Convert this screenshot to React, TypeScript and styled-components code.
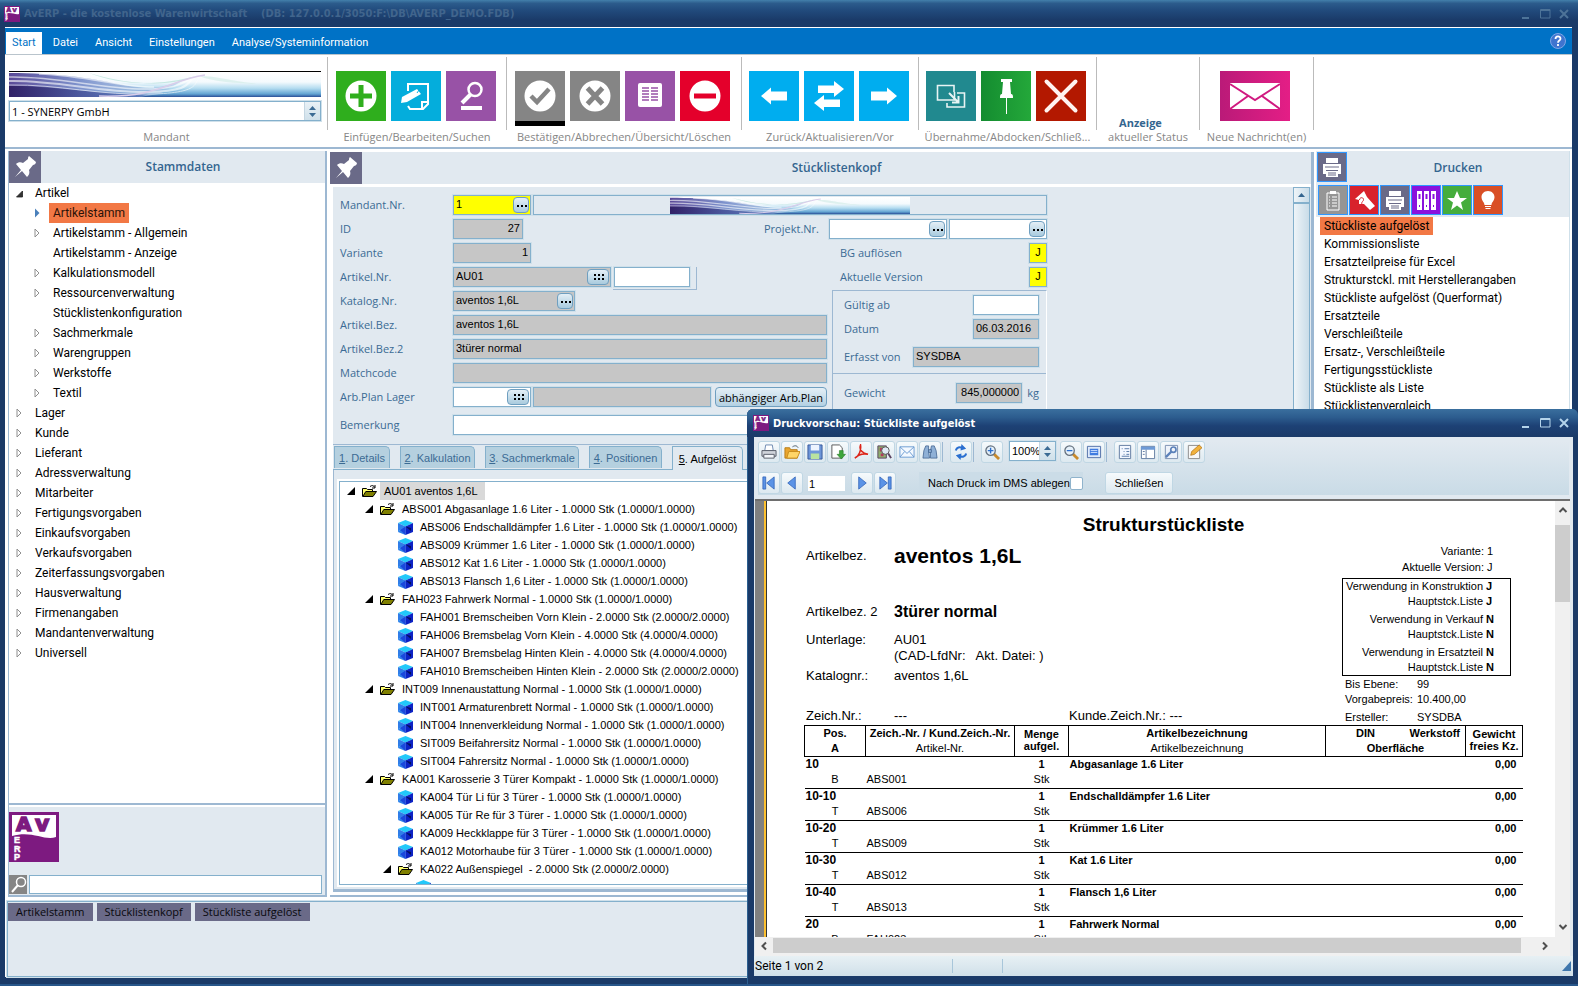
import React from "react";
import styled, { createGlobalStyle } from "styled-components";

const ui = `"Open Sans", "Noto Sans", sans-serif`;
const list = `Roboto, "Open Sans", sans-serif`;
const arial = `"Liberation Sans", Arial, sans-serif`;
const tahoma = `"DejaVu Sans Condensed", "DejaVu Sans", sans-serif`;

const c = {
  frame: "#1a3a68",
  accent: "#0072c6",
  panel: "#e1e9f0",
  edge: "#9db8d2",
  fieldEdge: "#84b0cc",
  halo: "#cfe0ea",
  title: "#34658f",
  label: "#3b6b94",
  tile: "#6a6a88",
  orange: "#f27845",
};

const GlobalStyle = createGlobalStyle`
  * { box-sizing: border-box; }
  body { margin: 0; font-family: ${ui}; font-size: 12px; color: #000; background: ${c.frame}; }
  button, input, select { font: inherit; color: inherit; margin: 0; padding: 0; border: 0; border-radius: 0; background: none; }
  ul, dl, dd, h1, h2, p { margin: 0; padding: 0; font-size: inherit; font-weight: inherit; }
  ul { list-style: none; }
  svg { display: block; }
`;

/* ---------- frame ---------- */

const Shell = styled.div`
  position: relative;
  display: flex;
  flex-direction: column;
  height: 100vh;
  overflow: hidden;
  background: ${c.frame};
  border-bottom: 2px solid #27568a;
`;
const TitleBar = styled.header<{ $active?: boolean }>`
  display: flex;
  align-items: center;
  flex: none;
  gap: 4px;
  height: ${(p) => (p.$active ? 28 : 27)}px;
  padding: 0 7px 0 ${(p) => (p.$active ? 6 : 4)}px;
  font: bold 11px ${tahoma};
  white-space: pre;
  color: ${(p) => (p.$active ? "#fff" : "#41658d")};
  background: ${(p) =>
    p.$active
      ? "linear-gradient(#3a6f9e, #2c5c8e 30%, #1d4175 60%, #1a3a68)"
      : "linear-gradient(#4380ab 0, #2c5c8c 12%, #224c7e 35%, #1a3a68 75%)"};
`;
const Caption = styled.h1`
  flex: 1;
  min-width: 0;
  overflow: hidden;
`;
const WindowButtons = styled.div<{ $active?: boolean }>`
  display: flex;
  gap: 5px;
  color: ${(p) => (p.$active ? "#b4d3ea" : "#4d7398")};
`;
const WindowButton = styled.button`
  width: 14px;
  height: 14px;
`;
const Body = styled.div`
  display: flex;
  flex-direction: column;
  flex: 1;
  min-height: 0;
  margin: 0 6px 7px 5px;
  background: #fff;
  border-top: 1px solid #fff;
`;

/* ---------- menu and ribbon ---------- */

const MenuBar = styled.nav`
  display: flex;
  align-items: flex-end;
  flex: none;
  height: 27px;
  padding: 0 6px 0 1px;
  background: ${c.accent};
  border-bottom: 1px solid #b9c4cc;
`;
const MenuTab = styled.button<{ $on?: boolean }>`
  height: 22px;
  margin-right: 5px;
  padding: 0 6px;
  font: 11px ${list};
  line-height: 22px;
  color: ${(p) => (p.$on ? c.accent : "#fff")};
  background: ${(p) => (p.$on ? "#fff" : "none")};
`;
const HelpButton = styled.button`
  width: 16px;
  height: 16px;
  margin: 0 0 5px auto;
`;
const Ribbon = styled.div`
  display: flex;
  flex: none;
  height: 94px;
  padding: 2px 0 0 1px;
  border-bottom: 2px solid ${c.edge};
`;
const Group = styled.section<{ $w: number }>`
  width: ${(p) => p.$w}px;
  flex: none;
`;
const GroupContent = styled.div`
  display: flex;
  justify-content: center;
  gap: 5px;
  height: 73px;
  padding: 14px 3px 0 0;
  border-right: 1px solid #bbb;
`;
const GroupCaption = styled.p`
  padding-right: 1px;
  font-size: 11px;
  line-height: 14px;
  text-align: center;
  color: #868686;
`;
const MandantBox = styled.div`
  flex: 1;
  padding: 0 3px;
`;
const Banner = styled.div`
  height: 26px;
  margin-bottom: 4px;
  border-top: 1px solid #000;
`;
const SelectBox = styled.div<{ $w?: number }>`
  display: flex;
  ${(p) => p.$w && `width: ${p.$w}px; margin: 0 3px 0 5px;`}
  height: 20px;
  background: #fff;
  border: 1px solid ${c.fieldEdge};
  box-shadow: 0 0 0 1px ${c.halo};
`;
const Select = styled.select`
  flex: 1;
  min-width: 0;
  padding-left: 2px;
  font-size: 11px;
  appearance: none;
  outline: 0;
`;
const Spin = styled.span`
  display: grid;
  place-items: center;
  width: 16px;
  background: linear-gradient(#e9f1f6, #cfe0ea);
  border-left: 1px solid #c4d6e2;
`;
const Tile = styled.button<{ $bg: string; $w?: number; $marked?: boolean }>`
  width: ${(p) => p.$w ?? 50}px;
  height: ${(p) => (p.$marked ? 55 : 50)}px;
  background: ${(p) => p.$bg};
  ${(p) => p.$marked && "border-bottom: 5px solid #000;"}
`;
const StatusText = styled.p`
  align-self: flex-end;
  font-size: 11px;
  font-weight: bold;
  line-height: 14px;
  color: ${c.title};
  margin-right: 12px;
`;

/* ---------- work area ---------- */

const Work = styled.main`
  display: flex;
  flex: 1;
  min-height: 0;
`;
const Side = styled.aside`
  display: flex;
  flex-direction: column;
  flex: none;
  width: 319px;
  margin: 2px 2px 0 3px;
  border-left: 1px solid ${c.edge};
  border-right: 2px solid ${c.edge};
`;
const PanelHead = styled.div`
  display: flex;
  flex: none;
  height: 32px;
  background: ${c.panel};
`;
const PinTile = styled.button`
  width: 32px;
  height: 32px;
  background: ${c.tile};
`;
const PanelTitle = styled.h2`
  flex: 1;
  font-size: 12px;
  font-weight: 600;
  line-height: 32px;
  text-align: center;
  color: ${c.title};
`;
const NavTree = styled.ul`
  flex: 1;
  min-height: 0;
  overflow: hidden;
  border-bottom: 2px solid ${c.edge};
  font-family: ${list};
`;
const NavRow = styled.li<{ $level: number }>`
  display: flex;
  align-items: center;
  height: 20px;
  padding-left: ${(p) => 7 + p.$level * 18}px;
`;
const NavArrow = styled.span`
  width: 15px;
`;
const NavText = styled.a<{ $on?: boolean }>`
  padding: 0 4px;
  line-height: 20px;
  color: ${(p) => (p.$on ? "#2b1208" : "#000")};
  text-decoration: none;
  background: ${(p) => (p.$on ? c.orange : "none")};
`;
const SideFoot = styled.div`
  flex: none;
  margin-top: 2px;
  height: 90px;
  padding: 5px 3px 0 0;
  background: ${c.panel};
  border-bottom: 2px solid ${c.edge};
`;
const SearchRow = styled.div`
  display: flex;
  gap: 2px;
  margin-top: 13px;
`;
const SearchButton = styled.button`
  width: 18px;
  height: 19px;
  background: #858585;
`;
const SearchInput = styled.input`
  flex: 1;
  min-width: 0;
  height: 19px;
  background: #fff;
  border: 1px solid ${c.fieldEdge};
`;

const Center = styled.section`
  display: flex;
  flex-direction: column;
  flex: 1;
  min-width: 0;
  margin: 3px 2px 0 1px;
  border-right: 3px solid ${c.edge};
  border-bottom: 2px solid ${c.edge};
`;
const CenterBody = styled.div`
  display: flex;
  flex: 1;
  min-height: 0;
  margin: 3px 0 3px 3px;
  background: ${c.panel};
  border-bottom: 3px solid ${c.edge};
`;
const CenterMain = styled.div`
  display: flex;
  flex-direction: column;
  flex: 1;
  min-width: 0;
`;
const ScrollTrack = styled.div`
  width: 17px;
  margin-right: 1px;
  border: 1px solid ${c.fieldEdge};
  background: linear-gradient(90deg, #eef4f8, #c9dce8);
`;
const ScrollUp = styled.button`
  display: grid;
  place-items: center;
  width: 15px;
  height: 16px;
  border-bottom: 2px solid ${c.fieldEdge};
`;

/* ---------- form ---------- */

const Form = styled.form`
  display: grid;
  grid-template-columns: 113px 374px 220px;
  grid-auto-rows: 20px;
  row-gap: 4px;
  flex: none;
  padding: 8px 0 13px 7px;
`;
const Label = styled.label<{ $w?: number }>`
  ${(p) => p.$w && `width: ${p.$w}px;`}
  font-size: 11px;
  line-height: 20px;
  color: ${c.label};
  white-space: nowrap;
`;
const Cell = styled.div<{ $wide?: boolean }>`
  display: flex;
  gap: 2px;
  ${(p) => p.$wide && "grid-column: 2 / 4;"}
`;
const Field = styled.span<{ $w?: number; $bg?: string }>`
  display: flex;
  align-items: center;
  ${(p) => (p.$w ? `width: ${p.$w}px; flex: none;` : "flex: 1; min-width: 0;")}
  height: 20px;
  background: ${(p) => p.$bg ?? "#fff"};
  border: 1px solid ${c.fieldEdge};
  box-shadow: 0 0 0 1px ${c.halo};
  font: 11px ${arial};
`;
const FieldInput = styled.input<{ $align?: string }>`
  flex: 1;
  width: 0;
  min-width: 0;
  height: 18px;
  padding: 0 2px 2px;
  text-align: ${(p) => p.$align ?? "left"};
  outline: 0;
`;
const Lookup = styled.button<{ $w: number }>`
  display: grid;
  place-items: center;
  flex: none;
  width: ${(p) => p.$w}px;
  height: 16px;
  margin-right: 1px;
  border: 1px solid #6f9fc0;
  border-radius: 4px;
  background: linear-gradient(#e4eff6, #a9cbde);
`;
const BannerField = styled(Field)`
  justify-content: center;
`;
const BannerClip = styled.span`
  width: 240px;
  height: 17px;
`;
const Spacer = styled.span`
  flex: 1;
`;
const ExtraFrame = styled.span`
  display: flex;
  width: 84px;
  height: 23px;
  padding: 0 6px 2px 1px;
  border-right: 1px solid ${c.edge};
  border-bottom: 1px solid ${c.edge};
`;
const PlanButton = styled.button`
  width: 112px;
  height: 20px;
  margin-left: 2px;
  font-size: 11px;
  line-height: 17px;
  white-space: nowrap;
  border: 1px solid #6f9fc0;
  border-radius: 4px;
  background: linear-gradient(#e4eff6, #b3d0e2);
`;
const DateBox = styled.div`
  grid-column: 3;
  grid-row: 5 / 10;
  margin: -1px 0 -6px 5px;
  border: solid ${c.edge};
  border-width: 1px 0 0 1px;
  border-right: 1px solid #fff;
`;
const DateRow = styled.div<{ $mt: number }>`
  display: flex;
  justify-content: space-between;
  margin-top: ${(p) => p.$mt}px;
  padding: 0 7px 0 11px;
`;
const DateRule = styled.hr`
  height: 1px;
  margin: 6px 0 0;
  border: 0;
  background: ${c.edge};
`;
const Unit = styled.span`
  margin-left: 5px;
  font-size: 11px;
  line-height: 20px;
  color: ${c.label};
`;
const RemarkLine = styled.div`
  display: flex;
  grid-column: 1 / 4;
  padding-top: 4px;
  height: 24px;
`;

/* ---------- tabs and parts tree ---------- */

const Tabs = styled.div`
  display: flex;
  gap: 10px;
  flex: none;
  height: 26px;
  padding: 1px 1px 0;
  border-top: 1px solid ${c.edge};
  border-bottom: 1px solid ${c.fieldEdge};
`;
const Tab = styled.button<{ $on?: boolean; $w: number }>`
  width: ${(p) => p.$w}px;
  height: ${(p) => (p.$on ? 24 : 22)}px;
  font: 11px ${arial};
  white-space: nowrap;
  color: ${(p) => (p.$on ? "#000" : c.label)};
  border: 1px solid ${c.fieldEdge};
  border-bottom: 0;
  border-radius: 0 5px 0 0;
  background: ${(p) => (p.$on ? c.panel : "#b5d0df")};
`;
const PartsPane = styled.div`
  display: flex;
  flex: 1;
  min-height: 0;
  padding: 11px 0 4px 5px;
  border-left: 1px solid ${c.edge};
`;
const PartsTree = styled.ul`
  flex: 1;
  overflow: hidden;
  padding-left: 7px;
  background: #fff;
  border: 1px solid ${c.fieldEdge};
  box-shadow: 0 0 0 2px #fff;
  font: 11px ${arial};
`;
const PartsRow = styled.li<{ $level: number }>`
  display: flex;
  align-items: center;
  height: 18px;
  padding-left: ${(p) => p.$level * 18}px;
  white-space: pre;
`;
const PartsIcon = styled.span<{ $w: number }>`
  width: ${(p) => p.$w}px;
`;
const PartsText = styled.span<{ $on?: boolean }>`
  line-height: 18px;
  padding: 0 7px 0 4px;
  background: ${(p) => (p.$on ? "#d9d9d9" : "none")};
`;

/* ---------- print list ---------- */

const PrintSide = styled.aside`
  flex: none;
  width: 254px;
  margin: 2px 2px 0 0;
  border-right: 1px solid ${c.halo};
`;
const PrintHead = styled.div`
  display: flex;
  height: 33px;
  padding: 1px 0 0 1px;
  background: ${c.panel};
`;
const SmallTile = styled.button<{ $bg: string }>`
  width: 30px;
  height: 30px;
  background: ${(p) => p.$bg};
  border: 1px solid #2f97ff;
`;
const SmallTiles = styled.div`
  display: flex;
  gap: 1px;
  height: 33px;
  padding: 1px 0 0 2px;
  background: ${c.panel};
`;
const PrintList = styled.ul`
  padding-left: 4px;
  font-family: ${list};
`;
const PrintItem = styled.li`
  height: 18px;
`;
const PrintLink = styled.a<{ $on?: boolean }>`
  display: inline-block;
  padding: 0 4px;
  line-height: 18px;
  color: #000;
  text-decoration: none;
  white-space: nowrap;
  background: ${(p) => (p.$on ? c.orange : "none")};
`;

/* ---------- task strip ---------- */

const TaskStrip = styled.footer`
  display: flex;
  align-items: flex-start;
  gap: 4px;
  flex: none;
  height: 76px;
  margin: 4px 2px 0;
  padding: 1px 0 0;
  background: ${c.panel};
  border: 1px solid ${c.fieldEdge};
  box-shadow: 0 0 0 1px ${c.halo};
`;
const Task = styled.button`
  height: 18px;
  padding: 0 8px;
  font-size: 11px;
  line-height: 18px;
  color: #08080c;
  background: ${c.tile};
`;

/* ---------- print preview window ---------- */

const Preview = styled.section`
  position: absolute;
  top: 409px;
  left: 747px;
  right: 0;
  bottom: -2px;
  display: flex;
  flex-direction: column;
  padding-bottom: 10px;
  overflow: hidden;
  background: ${c.frame};
  border-radius: 6px 6px 0 0;
  box-shadow: inset 1px 1px 0 #2b5f90;
`;
const PreviewBody = styled.div`
  display: flex;
  flex-direction: column;
  flex: 1;
  min-height: 0;
  margin: 0 5px 0 7px;
  background: ${c.panel};
`;
const ToolArea = styled.div`
  flex: none;
  height: 62px;
  padding: 4px;
`;
const ToolBand = styled.div`
  height: 54px;
  background: linear-gradient(${c.panel}, #c9dbe6);
  font: 11px ${arial};
`;
const ToolRow = styled.div<{ $low?: boolean }>`
  display: flex;
  gap: 1px;
  height: ${(p) => (p.$low ? 23 : 31)}px;
`;
const Tool = styled.button`
  display: grid;
  place-items: center;
  width: 22px;
  height: 22px;
  flex: none;
  border: 1px solid #c0d7e4;
  border-radius: 3px;
  background: linear-gradient(#f6fafc, #dde9f0);
`;
const ToolSep = styled.span`
  width: 1px;
  height: 20px;
  margin: 1px 6px 0 0;
  background: ${c.edge};
`;
const PageInput = styled.input`
  width: 37px;
  height: 15px;
  margin: 4px 5px 0 4px;
  padding-left: 1px;
  background: #fff;
`;
const DmsLabel = styled.label`
  display: flex;
  align-items: center;
  width: 164px;
  height: 22px;
  margin-left: 22px;
  padding-left: 9px;
  white-space: nowrap;
  background: #cbdce7;
`;
const DmsCheck = styled.input`
  appearance: none;
  flex: none;
  width: 13px;
  height: 13px;
  background: #fff;
  border: 1px solid #8fb3cc;
  border-radius: 2px;
`;
const CloseButton = styled.button`
  width: 68px;
  height: 22px;
  margin-left: 21px;
  border: 1px solid #c0d7e4;
  border-radius: 3px;
  background: linear-gradient(#f6fafc, #dde9f0);
`;
const Viewport = styled.div`
  display: flex;
  flex: 1;
  min-height: 0;
  margin: 0 3px 0 1px;
  border-top: 2px solid #6e6e6e;
`;
const Gutter = styled.div`
  width: 12px;
  flex: none;
  background: #808080;
  border-right: 1px solid #333;
  box-shadow: inset -2px 0 0 #fdc02f;
`;
const VScroll = styled.div`
  display: flex;
  flex-direction: column;
  align-items: center;
  width: 15px;
  flex: none;
  padding: 4px 0 5px;
  background: #f0f0f0;
`;
const VThumb = styled.div`
  width: 15px;
  height: 77px;
  margin: 10px 0 auto;
  background: #cdcdcd;
`;
const HScroll = styled.div`
  display: flex;
  align-items: center;
  justify-content: space-between;
  flex: none;
  height: 19px;
  margin: 0 3px 0 1px;
  padding: 0 20px 2px 4px;
  background: #f0f0f0;
`;
const HThumb = styled.div`
  flex: 1;
  height: 15px;
  margin: 0 19px 0 4px;
  background: #cdcdcd;
`;
const Status = styled.div`
  display: flex;
  align-items: center;
  flex: none;
  height: 20px;
  padding-left: 1px;
  background: linear-gradient(#e7f0f4, #d0e0e9);
`;
const StatusPart = styled.span<{ $w?: number }>`
  ${(p) => (p.$w ? `width: ${p.$w}px; border-right: 1px solid #a8c6da;` : "flex: 1;")}
  line-height: 18px;
  font: 12px ${list};
`;

/* ---------- report page ---------- */

const Page = styled.article`
  flex: 1;
  min-width: 0;
  overflow: hidden;
  padding: 11px 32px 0 37px;
  background: #fff;
  font: 13px ${arial};
`;
const ReportTitle = styled.h1`
  font-size: 19px;
  font-weight: bold;
  line-height: 26px;
  text-align: center;
`;
const ReportHead = styled.div`
  display: grid;
  grid-template-columns: 1fr 169px;
  padding-right: 12px;
  height: 187px;
`;
const Info = styled.dl<{ $mt?: number; $h?: number }>`
  display: grid;
  grid-template-columns: 88px 175px 1fr;
  margin: ${(p) => p.$mt ?? 0}px 0 0 2px;
  line-height: ${(p) => p.$h ?? 16}px;
  white-space: pre;
`;
const Big = styled.dd<{ $size: number }>`
  font-size: ${(p) => p.$size}px;
  font-weight: bold;
`;
const Usage = styled.div`
  font-size: 11px;
`;
const UsageRow = styled.p<{ $mt?: number; $h?: number }>`
  display: grid;
  grid-template-columns: 1fr 24px;
  column-gap: 3px;
  margin-top: ${(p) => p.$mt ?? 0}px;
  line-height: ${(p) => p.$h ?? 15}px;
  text-align: right;
  white-space: nowrap;
`;
const UsageValue = styled.span`
  text-align: left;
`;
const UsageFlag = styled.b`
  text-align: left;
`;
const UsageBox = styled.div`
  margin: 3px 0 1px;
  border: 1px solid #000;
`;
const MetaRow = styled.p<{ $mt?: number }>`
  display: grid;
  grid-template-columns: 72px 1fr;
  margin: ${(p) => p.$mt ?? 0}px 0 0 3px;
  line-height: 15px;
`;
const Table = styled.table`
  width: 100%;
  table-layout: fixed;
  border-collapse: collapse;
  font-size: 11px;
  white-space: nowrap;
`;
const Th = styled.th<{ $w?: number }>`
  ${(p) => p.$w && `width: ${p.$w}px;`}
  height: 30px;
  padding: 0;
  vertical-align: top;
  line-height: 15px;
  border: 1px solid #000;
`;
const ThTight = styled(Th)`
  line-height: 12px;
  padding-top: 2px;
`;
const Plain = styled.span`
  font-weight: normal;
`;
const DinLine = styled.div`
  display: flex;
  justify-content: space-between;
  padding: 0 5px 0 30px;
`;
const Tr = styled.tr`
  height: 32px;
  border-bottom: 1px solid #000;
`;
const Td = styled.td<{ $align?: string; $bold?: boolean }>`
  padding: 0 ${(p) => (p.$align === "right" ? 6 : 1)}px 0 1px;
  line-height: 15px;
  vertical-align: top;
  text-align: ${(p) => p.$align ?? "left"};
  font-weight: ${(p) => (p.$bold ? "bold" : "normal")};
`;
const Line = styled.div<{ $bold?: boolean; $align?: string; $size?: number }>`
  height: 15px;
  font-weight: ${(p) => (p.$bold ? "bold" : "normal")};
  text-align: ${(p) => p.$align ?? "inherit"};
  font-size: ${(p) => p.$size ?? 11}px;
`;

/* ---------- drawings ---------- */

const Logo = ({ size }: { size: number }) => (
  <svg width={size} height={size} viewBox="0 0 50 50">
    <rect width="50" height="50" fill="#7d1a80" />
    <path d="M3 3h44v22c-12 4-24-7-44-1z" fill="#fff" />
    <g fontFamily="DejaVu Sans" fontWeight="bold" fontSize="20" fill="#7d1a80" stroke="#7d1a80" strokeWidth="1.500">
      <text x="7" y="19">A</text>
      <text x="26" y="19" fontSize="22">v</text>
    </g>
    <g fontFamily="Liberation Sans" fontWeight="bold" fontSize="9" fill="#fff" stroke="#fff" strokeWidth=".5">
      <text x="5" y="31">E</text>
      <text x="5" y="40">R</text>
      <text x="5" y="48">P</text>
    </g>
  </svg>
);

const Waves = ({ id }: { id: string }) => (
  <svg width="100%" height="100%" viewBox="0 0 312 25" preserveAspectRatio="none">
    <defs>
      <linearGradient id={id + "v"} x1="0" y1="0" x2="0" y2="1">
        <stop offset="0" stopColor="#fff" />
        <stop offset=".4" stopColor="#f4fafd" />
        <stop offset=".65" stopColor="#b4dcf0" />
        <stop offset=".88" stopColor="#62a4d2" />
        <stop offset="1" stopColor="#2a4f98" />
      </linearGradient>
      <linearGradient id={id + "h"}>
        <stop offset="0" stopColor="#5a4a98" />
        <stop offset=".4" stopColor="#7d92cc" />
        <stop offset="1" stopColor="#a9cbe8" stopOpacity=".5" />
      </linearGradient>
      <linearGradient id={id + "d"}>
        <stop offset="0" stopColor="#2a1a5e" />
        <stop offset="1" stopColor="#3f5fb0" stopOpacity=".6" />
      </linearGradient>
    </defs>
    <rect width="312" height="25" fill={`url(#${id}v)`} />
    <path d="M0 1C50 1 80 6 110 12S150 17 175 8L150 22 130 25H0z" fill={`url(#${id}h)`} />
    <path d="M0 14C40 13 80 22 140 22L130 25H0z" fill={`url(#${id}d)`} opacity=".85" />
    <path d="M80 1c30 12 70 14 110 2 -20 10-60 13-110-2z" fill="#a6dcd0" opacity=".6" />
    <path d="M190 4c20 0 30 5 60 8 -25-1-45-2-60-8z" fill="#d4ece8" opacity=".7" />
    <g fill="none" stroke="#fff" opacity=".6">
      <path d="M0 5C50 4 90 17 135 17S175 5 195 3" strokeWidth="1.500" />
      <path d="M0 9C50 8 90 21 140 20S175 7 190 3" strokeWidth="2" />
      <path d="M0 13C50 12 90 24 145 22S180 8 196 2" />
      <path d="M30 2C80 4 110 15 145 15" strokeWidth="1.500" />
    </g>
    <path d="M90 24C150 26 160 8 196 3" fill="none" stroke="#d9cdea" strokeWidth="1.500" />
  </svg>
);

const Spinner = () => (
  <svg width="7" height="11" viewBox="0 0 7 11" fill="#3b6b94">
    <path d="M3.500 0L7 4H0zM3.500 11L7 7H0z" />
  </svg>
);

const PushPin = () => (
  <svg width="32" height="32" viewBox="0 0 32 32" fill="#fff">
    <path d="M20 5l7 6c0 2-2 3-3 3l-4 5c1 3 0 5-2 7l-5-6-7 6 6-7-5-6c2-2 5-2 7-1l5-4c0-1 0-2 1-3z" />
  </svg>
);

const arrowR = "M38 25L28 16.500v4H12v9h16v4z";
const ribbonArt: Record<string, React.ReactNode> = {
  add: (<><circle cx="25" cy="25" r="15.500" fill="#fff" /><path d="M25 14v22M14 25h22" stroke="#2fae1d" strokeWidth="5" /></>),
  edit: (
    <>
      <path d="M17 20v-7h20v20l-5 5H19l-2-3M37 31h-6v7" fill="none" stroke="#fff" strokeWidth="2" />
      <path d="M10 32l1-6 15-8 4 5-14 8z" fill="#fff" />
      <path d="M26 22l2-3" stroke="#04addc" strokeWidth="1" />
    </>
  ),
  find: (<><circle cx="29" cy="18.500" r="6.500" fill="none" stroke="#fff" strokeWidth="2.500" /><path d="M25 23l-9 9" stroke="#fff" strokeWidth="4" /><path d="M15 35h21v4H15z" fill="#fff" /></>),
  ok: (<><circle cx="25" cy="25" r="15.500" fill="#fff" /><path d="M16 25l6 6 12-13" fill="none" stroke="#858585" strokeWidth="4.500" /></>),
  cancel: (<><circle cx="25" cy="25" r="15.500" fill="#fff" /><path d="M17.500 17l15 16M32.500 17l-15 16" stroke="#858585" strokeWidth="5" /></>),
  list: (
    <>
      <rect x="13" y="12" width="24" height="24" rx="2" fill="#fff" />
      <path d="M17 17h7M26 17h7M17 20h7M26 20h7M17 23h7M26 23h7M17 26h7M26 26h7M17 29h7M26 29h7" stroke="#9852a6" strokeWidth="1.500" />
    </>
  ),
  remove: (<><circle cx="25" cy="25" r="15.500" fill="#fff" /><path d="M14 25h22" stroke="#e4002b" strokeWidth="5" /></>),
  back: <path d={arrowR} fill="#fff" transform="rotate(180 25 25)" />,
  fwd: <path d={arrowR} fill="#fff" />,
  swap: <path d="M40 18l-10-8v4.500H14v7.500h16v4zM10 32l10 8v-4h16v-7.500H20V24z" fill="#fff" />,
  take: (
    <g fill="none" stroke="#e8f4f4" strokeWidth="1.600">
      <path d="M21 29h-9.500V14.500H28V21M31 22h7.500v14H21v-4M28.500 21v8H21" />
      <path d="M23 22l9 9M32.500 25v6.500H26" strokeWidth="2" />
    </g>
  ),
  undock: <path d="M20 8h11v3h-2l1 12c2 0 2 2 2 4h-6v16h-1V27h-6c0-2 0-4 2-4l1-12h-2z" fill="#fff" />,
  close: <path d="M10.500 10.500l29 29M39.500 10.500l-29 29" stroke="#fff3f0" strokeWidth="4" strokeLinecap="round" />,
};

const RibbonIcon = ({ name }: { name: string }) => (
  <svg width="50" height="50" viewBox="0 0 50 50">{ribbonArt[name]}</svg>
);

const Mail = () => (
  <svg width="70" height="50" viewBox="0 0 70 50">
    <rect x="10" y="12" width="50" height="26" fill="#fff" />
    <path d="M10 13l25 16 25-16M10 38l18-13M60 38L42 25" fill="none" stroke="#d01a80" strokeWidth="2" />
  </svg>
);

const smallArt: Record<string, React.ReactNode> = {
  print: (<><path d="M8 5h12v5H8z" fill="#fff" /><path d="M5 11h18v10h-3v-4H8v4H5z" fill="#fff" /><path d="M8 18h12v6H8z" fill="#fff" /><path d="M10 20h8M10 22h8" stroke={c.tile} /><path d="M7 14h14" stroke={c.tile} /></>),
  clip: (<><path d="M8 7h12v17H8z" fill="none" stroke="#fff" /><path d="M11 5h6v3h-6z" fill="#fff" /><path d="M10 11h1M13 11h5M10 14h1M13 14h5M10 17h1M13 17h5M10 20h1M13 20h5" stroke="#fff" /></>),
  tag: (<><path d="M14 5l-9 8 4 1v4h5l6 6 5-4-8-9z" fill="#fff" /><path d="M9.500 14c0-3 4-3 4-.5S11 15 12 19" stroke="#d8222c" fill="none" /></>),
  binders: (<g fill="#fff"><path d="M5 5h5v19H5zM12 5h5v19h-5zM19 5h5v19h-5z" /><path d="M6.500 8h2v5h-2zM13.500 8h2v5h-2zM20.500 8h2v5h-2zM7 19h1v2H7zM14 19h1v2h-1zM21 19h1v2h-1z" fill="#8a12dc" /></g>),
  star: <path d="M14 5l3 7h7l-6 4.500 2 7.500-6-4.500L8 24l2-7.500L4 12h7z" fill="#fff" />,
  bulb: (<><path d="M14 5c4 0 6.500 3 6.500 6 0 4-3 5-3 8h-7c0-3-3-4-3-8 0-3 2.500-6 6.500-6z" fill="#fff" /><path d="M11 20.500h6M11.500 22.500h5" stroke="#fff" strokeWidth="1.200" /></>),
};
const SmallIcon = ({ name }: { name: string }) => (
  <svg width="28" height="28" viewBox="0 0 28 28">{smallArt[name]}</svg>
);

const toolArt: Record<string, React.ReactNode> = {
  print: (<><path d="M5 1h7l1 6H4z" fill="#fff" stroke="#6c87b0" /><path d="M1 7h15v6H1z" fill="#cfd3da" stroke="#555b66" /><path d="M3 11h11v4H3z" fill="#f3f6fa" stroke="#555b66" /></>),
  open: (<><path d="M1 15V4h5l1 2h7v9z" fill="#e9a52e" stroke="#b87b14" /><path d="M3 15l2-7h12l-3 7z" fill="#ffd567" stroke="#c68b1b" /><path d="M9 3c3-2 5-1 6 1" fill="none" stroke="#456" /></>),
  save: (<><path d="M1 1h15v15H1z" fill="#6d95d8" stroke="#35579b" /><path d="M4 1h9v6H4z" fill="#eef4ff" /><path d="M4 10h9v6H4z" fill="#b9e2a0" /></>),
  exportDoc: (<><path d="M2 1h8l3 3v11H2z" fill="#fff" stroke="#555" /><path d="M10 7h4v4h2.500L12 16 7.500 11H10z" fill="#3da53a" stroke="#237a22" strokeWidth=".6" /></>),
  pdf: <path d="M8 1c-2 5 2 9 8 10-5-1-10 0-14 4 4-2 7-8 6-14z" fill="#f8d6d0" stroke="#dc2418" strokeWidth="1.600" />,
  findDoc: (<><path d="M2 2h9v13H2z" fill="#8fae6f" stroke="#59415f" /><path d="M4 4h3v4H4zM5 10h3v3H5z" fill="#b23a5c" /><circle cx="10" cy="7" r="4" fill="#dfe9f4" stroke="#555" /><path d="M13 10l3 5" stroke="#59415f" strokeWidth="2" /></>),
  mail: (<><path d="M1 3h15v11H1z" fill="#f4f9ff" stroke="#6b9bd1" /><path d="M1 3l7.500 7L16 3M1 14l5-6M16 14l-5-6" fill="none" stroke="#6b9bd1" /></>),
  binoculars: (<g fill="#8fb0d6" stroke="#3d5f8c" strokeWidth=".8"><path d="M4 2h3v5l1 8H1l1-8zM10 2h3l2 5 1 8H9V7z" /><path d="M7 6h3v3H7z" /></g>),
  refresh: (<g fill="none" stroke="#2a6fd0" strokeWidth="2.200"><path d="M3 7c1-4 4-4 7-3" /><path d="M14 10c-1 4-4 4-7 3" /><path d="M9 0l5 5-6 2zM8 17l-5-5 6-2z" fill="#2a6fd0" stroke="none" /></g>),
  zoomIn: (<><path d="M10 10l6 6" stroke="#c98a2c" strokeWidth="3" /><circle cx="7" cy="7" r="5" fill="#e6f1fa" stroke="#66727f" strokeWidth="1.400" /><path d="M7 4v6M4 7h6" stroke="#2a6fd0" strokeWidth="1.500" /></>),
  zoomOut: (<><path d="M10 10l6 6" stroke="#c98a2c" strokeWidth="3" /><circle cx="7" cy="7" r="5" fill="#e6f1fa" stroke="#66727f" strokeWidth="1.400" /><path d="M4 7h6" stroke="#2a6fd0" strokeWidth="1.500" /></>),
  screen: (<><path d="M1.500 2.500h14v12h-14z" fill="#dfeafa" stroke="#4f6ea8" /><path d="M4 5h9v7H4z" fill="#3f7be0" /><path d="M5 7h7M5 9h7" stroke="#cfe0ff" /></>),
  outline: (<><path d="M2.500 1.500h12v14h-12z" fill="#f3f7ff" stroke="#5f7a9f" /><path d="M5 5h1M8 5h5M7 8h1M10 8h3M7 11h1M10 11h3M5 13h8" stroke="#5577a8" /></>),
  layout: (<><path d="M1.500 2.500h14v13h-14z" fill="#fff" stroke="#5f7a9f" /><path d="M1 3h15v3H1z" fill="#6e9ad6" /><path d="M6.500 6v9" stroke="#5f7a9f" /><path d="M3 8h2M3 11h2" stroke="#5f7a9f" /></>),
  settings: (<><path d="M2.500 1.500h13v14h-13z" fill="#eef3fa" stroke="#7a8fb0" /><path d="M3 14l6-6" stroke="#5c82ba" strokeWidth="2.500" /><circle cx="11" cy="6" r="2.800" fill="none" stroke="#5c82ba" strokeWidth="1.800" /></>),
  editDoc: (<><path d="M2.500 1.500h12v14h-12z" fill="#f7f7f7" stroke="#8a8a8a" /><path d="M5 12l1-4 8-7 3 3-8 7z" fill="#f2b23c" stroke="#b3761a" strokeWidth=".8" /></>),
  first: <path d="M2 2h3v13H2zM14 2v13L6 8.500z" fill="#5b93e6" stroke="#2b5fb5" strokeWidth=".8" />,
  prev: <path d="M12 2v13L4 8.500z" fill="#5b93e6" stroke="#2b5fb5" strokeWidth=".8" />,
  next: <path d="M5 2v13l8-6.500z" fill="#5b93e6" stroke="#2b5fb5" strokeWidth=".8" />,
  last: <path d="M3 2v13l8-6.500zM12 2h3v13h-3z" fill="#5b93e6" stroke="#2b5fb5" strokeWidth=".8" />,
};
const ToolButton = ({ name, label }: { name: string; label: string }) => (
  <Tool type="button" aria-label={label}>
    <svg width="16" height="16" viewBox="0 0 17 17">{toolArt[name]}</svg>
  </Tool>
);

const Triangle = ({ kind }: { kind: "open" | "closed" | "current" }) => (
  <svg width="8" height="12" viewBox="0 0 8 12">
    {kind === "open" && <path d="M6.500 4v6h-6z" fill="#333" stroke="#222" strokeWidth=".8" />}
    {kind === "closed" && <path d="M1 2l4 4-4 4z" fill="#fff" stroke="#8f8f8f" />}
    {kind === "current" && <path d="M1 1.500l4.500 4.500L1 10.500z" fill="#4a80bb" />}
  </svg>
);
const OpenMark = () => (
  <svg width="8" height="8" viewBox="0 0 8 8"><path d="M8 0v8H0z" /></svg>
);
const Folder = () => (
  <svg width="15" height="12" viewBox="0 0 15 12">
    <path d="M.5 11.500V3.500h4l1 1h5v2" fill="#ffff6e" stroke="#000" />
    <path d="M.8 11.500l3-5h10.700l-3.500 5z" fill="#808000" stroke="#000" />
    <path d="M8 1.500c2-1.500 4-1 4.500.8M13 0v3h-3" fill="none" stroke="#000" />
  </svg>
);
const Cube = () => (
  <svg width="15" height="15" viewBox="0 0 15 15">
    <path d="M7.500 0L15 3 7.500 6.500 0 3z" fill="#22c8fa" />
    <path d="M0 3l7.500 3.500V15L0 12z" fill="#2f7de8" />
    <path d="M15 3L7.500 6.500V15L15 12z" fill="#0c22c4" />
    <path d="M7.500 6.500L0 12v-1z" fill="#4fa5f5" />
    <path d="M7.500 15L2 10l5.500-3.500z" fill="#1a48dc" />
    <path d="M7.500 6.500L13 11V8z" fill="#04105f" />
  </svg>
);

const Dots = () => (
  <svg width="11" height="3" viewBox="0 0 11 3"><path d="M1 1h2v2H1zM5 1h2v2H5zM9 1h2v2H9z" /></svg>
);
const Grid6 = () => (
  <svg width="11" height="7" viewBox="0 0 11 7"><path d="M1 0h2v2H1zM5 0h2v2H5zM9 0h2v2H9zM1 4h2v2H1zM5 4h2v2H5zM9 4h2v2H9z" /></svg>
);

const Chevron = ({ turn }: { turn: number }) => (
  <svg width="10" height="10" viewBox="0 0 10 10">
    <path d="M1.500 7L5 3.500 8.500 7" fill="none" stroke="#505050" strokeWidth="2" transform={`rotate(${turn} 5 5)`} />
  </svg>
);

const WindowControls = ({ active }: { active?: boolean }) => (
  <WindowButtons $active={active}>
    <WindowButton aria-label="Minimieren">
      <svg width="14" height="14" viewBox="0 0 14 14"><path d="M3 11h7" stroke="currentColor" strokeWidth="2" /></svg>
    </WindowButton>
    <WindowButton aria-label="Maximieren">
      <svg width="14" height="14" viewBox="0 0 14 14"><path d="M2.500 2.500h9.500v8.500H2.500zM2 3.500h10" fill="none" stroke="currentColor" /></svg>
    </WindowButton>
    <WindowButton aria-label="Fenster schließen">
      <svg width="14" height="14" viewBox="0 0 14 14"><path d="M3 3l8 8M11 3l-8 8" stroke="currentColor" strokeWidth="2" /></svg>
    </WindowButton>
  </WindowButtons>
);

/* ---------- data ---------- */

type Nav = [string, number, ("open" | "closed" | "current")?];
const nav: Nav[] = [
  ["Artikel", 0, "open"],
  ["Artikelstamm", 1, "current"],
  ["Artikelstamm - Allgemein", 1, "closed"],
  ["Artikelstamm - Anzeige", 1],
  ["Kalkulationsmodell", 1, "closed"],
  ["Ressourcenverwaltung", 1, "closed"],
  ["Stücklistenkonfiguration", 1],
  ["Sachmerkmale", 1, "closed"],
  ["Warengruppen", 1, "closed"],
  ["Werkstoffe", 1, "closed"],
  ["Textil", 1, "closed"],
  ["Lager", 0, "closed"],
  ["Kunde", 0, "closed"],
  ["Lieferant", 0, "closed"],
  ["Adressverwaltung", 0, "closed"],
  ["Mitarbeiter", 0, "closed"],
  ["Fertigungsvorgaben", 0, "closed"],
  ["Einkaufsvorgaben", 0, "closed"],
  ["Verkaufsvorgaben", 0, "closed"],
  ["Zeiterfassungsvorgaben", 0, "closed"],
  ["Hausverwaltung", 0, "closed"],
  ["Firmenangaben", 0, "closed"],
  ["Mandantenverwaltung", 0, "closed"],
  ["Universell", 0, "closed"],
];

const parts: [number, string, boolean][] = [
  [0, "AU01 aventos 1,6L", true],
  [1, "ABS001 Abgasanlage 1.6 Liter - 1.0000 Stk (1.0000/1.0000)", true],
  [2, "ABS006 Endschalldämpfer 1.6 Liter - 1.0000 Stk (1.0000/1.0000)", false],
  [2, "ABS009 Krümmer 1.6 Liter - 1.0000 Stk (1.0000/1.0000)", false],
  [2, "ABS012 Kat 1.6 Liter - 1.0000 Stk (1.0000/1.0000)", false],
  [2, "ABS013 Flansch 1,6 Liter - 1.0000 Stk (1.0000/1.0000)", false],
  [1, "FAH023 Fahrwerk Normal - 1.0000 Stk (1.0000/1.0000)", true],
  [2, "FAH001 Bremscheiben Vorn Klein - 2.0000 Stk (2.0000/2.0000)", false],
  [2, "FAH006 Bremsbelag Vorn Klein - 4.0000 Stk (4.0000/4.0000)", false],
  [2, "FAH007 Bremsbelag Hinten Klein - 4.0000 Stk (4.0000/4.0000)", false],
  [2, "FAH010 Bremscheiben Hinten Klein - 2.0000 Stk (2.0000/2.0000)", false],
  [1, "INT009 Innenaustattung Normal - 1.0000 Stk (1.0000/1.0000)", true],
  [2, "INT001 Armaturenbrett Normal - 1.0000 Stk (1.0000/1.0000)", false],
  [2, "INT004 Innenverkleidung Normal - 1.0000 Stk (1.0000/1.0000)", false],
  [2, "SIT009 Beifahrersitz Normal - 1.0000 Stk (1.0000/1.0000)", false],
  [2, "SIT004 Fahrersitz Normal - 1.0000 Stk (1.0000/1.0000)", false],
  [1, "KA001 Karosserie 3 Türer Kompakt - 1.0000 Stk (1.0000/1.0000)", true],
  [2, "KA004 Tür Li für 3 Türer - 1.0000 Stk (1.0000/1.0000)", false],
  [2, "KA005 Tür Re für 3 Türer - 1.0000 Stk (1.0000/1.0000)", false],
  [2, "KA009 Heckklappe für 3 Türer - 1.0000 Stk (1.0000/1.0000)", false],
  [2, "KA012 Motorhaube für 3 Türer - 1.0000 Stk (1.0000/1.0000)", false],
  [2, "KA022 Außenspiegel  - 2.0000 Stk (2.0000/2.0000)", true],
  [3, "", false],
];

const prints = [
  "Stückliste aufgelöst",
  "Kommissionsliste",
  "Ersatzteilpreise für Excel",
  "Strukturstckl. mit Herstellerangaben",
  "Stückliste aufgelöst (Querformat)",
  "Ersatzteile",
  "Verschleißteile",
  "Ersatz-, Verschleißteile",
  "Fertigungsstückliste",
  "Stückliste als Liste",
  "Stücklistenvergleich",
];

const reportRows = [
  ["10", "B", "ABS001", "Abgasanlage 1.6 Liter"],
  ["10-10", "T", "ABS006", "Endschalldämpfer 1.6 Liter"],
  ["10-20", "T", "ABS009", "Krümmer 1.6 Liter"],
  ["10-30", "T", "ABS012", "Kat 1.6 Liter"],
  ["10-40", "T", "ABS013", "Flansch 1,6 Liter"],
  ["20", "B", "FAH023", "Fahrwerk Normal"],
];

const usage: [string, string][] = [
  ["Verwendung in Konstruktion", "J"],
  ["Hauptstck.Liste", "J"],
  ["Verwendung in Verkauf", "N"],
  ["Hauptstck.Liste", "N"],
  ["Verwendung in Ersatzteil", "N"],
  ["Hauptstck.Liste", "N"],
];

/* ---------- parts of the page ---------- */

const grey = "#c6c6c6";
const yellow = "#ffff00";

type BoxProps = { id: string; w?: number; bg?: string; value?: string; align?: string; lookup?: "dots" | "grid"; label?: string };
const Box = ({ id, w, bg, value = "", align, lookup, label }: BoxProps) => (
  <Field $w={w} $bg={bg}>
    <FieldInput id={id} aria-label={label} defaultValue={value} $align={align} />
    {lookup && (
      <Lookup type="button" $w={lookup === "dots" ? 16 : 22} aria-label="Auswählen">
        {lookup === "dots" ? <Dots /> : <Grid6 />}
      </Lookup>
    )}
  </Field>
);

const RibbonBar = () => (
  <Ribbon>
    <Group $w={322}>
      <GroupContent>
        <MandantBox>
          <Banner><Waves id="top" /></Banner>
          <SelectBox>
            <Select aria-label="Mandant"><option>1 - SYNERPY GmbH</option></Select>
            <Spin><Spinner /></Spin>
          </SelectBox>
        </MandantBox>
      </GroupContent>
      <GroupCaption>Mandant</GroupCaption>
    </Group>
    <Group $w={179}>
      <GroupContent>
        <Tile $bg="#2fae1d" aria-label="Einfügen"><RibbonIcon name="add" /></Tile>
        <Tile $bg="#04addc" aria-label="Bearbeiten"><RibbonIcon name="edit" /></Tile>
        <Tile $bg="#9852a6" aria-label="Suchen"><RibbonIcon name="find" /></Tile>
      </GroupContent>
      <GroupCaption>Einfügen/Bearbeiten/Suchen</GroupCaption>
    </Group>
    <Group $w={235}>
      <GroupContent>
        <Tile $bg="#858585" $marked aria-label="Bestätigen"><RibbonIcon name="ok" /></Tile>
        <Tile $bg="#858585" aria-label="Abbrechen"><RibbonIcon name="cancel" /></Tile>
        <Tile $bg="#9852a6" aria-label="Übersicht"><RibbonIcon name="list" /></Tile>
        <Tile $bg="#e4002b" aria-label="Löschen"><RibbonIcon name="remove" /></Tile>
      </GroupContent>
      <GroupCaption>Bestätigen/Abbrechen/Übersicht/Löschen</GroupCaption>
    </Group>
    <Group $w={177}>
      <GroupContent>
        <Tile $bg="#00adef" aria-label="Zurück"><RibbonIcon name="back" /></Tile>
        <Tile $bg="#00adef" aria-label="Aktualisieren"><RibbonIcon name="swap" /></Tile>
        <Tile $bg="#00adef" aria-label="Vor"><RibbonIcon name="fwd" /></Tile>
      </GroupContent>
      <GroupCaption>Zurück/Aktualisieren/Vor</GroupCaption>
    </Group>
    <Group $w={178}>
      <GroupContent>
        <Tile $bg="#21898f" aria-label="Übernahme"><RibbonIcon name="take" /></Tile>
        <Tile $bg="linear-gradient(90deg, #148c30, #24a83a)" aria-label="Abdocken"><RibbonIcon name="undock" /></Tile>
        <Tile $bg="#b31800" aria-label="Schließen"><RibbonIcon name="close" /></Tile>
      </GroupContent>
      <GroupCaption>Übernahme/Abdocken/Schließ...</GroupCaption>
    </Group>
    <Group $w={103}>
      <GroupContent><StatusText>Anzeige</StatusText></GroupContent>
      <GroupCaption>aktueller Status</GroupCaption>
    </Group>
    <Group $w={114}>
      <GroupContent>
        <Tile $w={70} $bg="linear-gradient(90deg, #ba1a78, #e41e86)" aria-label="Nachrichten"><Mail /></Tile>
      </GroupContent>
      <GroupCaption>Neue Nachricht(en)</GroupCaption>
    </Group>
  </Ribbon>
);

const LeftSide = () => (
  <Side>
    <PanelHead>
      <PinTile aria-label="Anheften"><PushPin /></PinTile>
      <PanelTitle>Stammdaten</PanelTitle>
    </PanelHead>
    <NavTree>
      {nav.map(([text, level, mark]) => (
        <NavRow key={text} $level={level}>
          <NavArrow>{mark && <Triangle kind={mark} />}</NavArrow>
          <NavText href="#" $on={mark === "current"}>{text}</NavText>
        </NavRow>
      ))}
    </NavTree>
    <SideFoot>
      <Logo size={50} />
      <SearchRow>
        <SearchButton aria-label="Suchen">
          <svg width="18" height="19" viewBox="0 0 18 19"><circle cx="12" cy="7" r="4.500" fill="none" stroke="#fff" strokeWidth="1.500" /><path d="M9 10l-6 7" stroke="#fff" strokeWidth="2" /></svg>
        </SearchButton>
        <SearchInput aria-label="Suche" />
      </SearchRow>
    </SideFoot>
  </Side>
);

const HeadForm = () => (
  <Form>
    <Label htmlFor="mandant">Mandant.Nr.</Label>
    <Cell $wide>
      <Box id="mandant" w={78} bg={yellow} value="1" lookup="dots" />
      <BannerField $bg={c.panel}><BannerClip><Waves id="mid" /></BannerClip></BannerField>
    </Cell>
    <Label htmlFor="id">ID</Label>
    <Cell $wide>
      <Box id="id" w={70} bg={grey} value="27" align="right" />
      <Spacer />
      <Label htmlFor="projekt" $w={63}>Projekt.Nr.</Label>
      <Box id="projekt" w={118} lookup="dots" />
      <Box id="projekt2" w={98} lookup="dots" label="Projekt.Nr. Zusatz" />
    </Cell>
    <Label htmlFor="variante">Variante</Label>
    <Cell $wide>
      <Box id="variante" w={78} bg={grey} value="1" align="right" />
      <Spacer />
      <Label htmlFor="bg" $w={187}>BG auflösen</Label>
      <Box id="bg" w={18} bg={yellow} value="J" align="center" />
    </Cell>
    <Label htmlFor="artikel">Artikel.Nr.</Label>
    <Cell $wide>
      <Box id="artikel" w={158} bg={grey} value="AU01" lookup="grid" />
      <ExtraFrame><Box id="artikel2" w={76} label="Artikel.Nr. Zusatz" /></ExtraFrame>
      <Spacer />
      <Label htmlFor="version" $w={187}>Aktuelle Version</Label>
      <Box id="version" w={18} bg={yellow} value="J" align="center" />
    </Cell>
    <Label htmlFor="katalog">Katalog.Nr.</Label>
    <Cell><Box id="katalog" w={122} bg={grey} value="aventos 1,6L" lookup="dots" /></Cell>
    <Label htmlFor="bez">Artikel.Bez.</Label>
    <Cell><Box id="bez" bg={grey} value="aventos 1,6L" /></Cell>
    <Label htmlFor="bez2">Artikel.Bez.2</Label>
    <Cell><Box id="bez2" bg={grey} value="3türer normal" /></Cell>
    <Label htmlFor="match">Matchcode</Label>
    <Cell><Box id="match" bg={grey} /></Cell>
    <Label htmlFor="plan">Arb.Plan Lager</Label>
    <Cell>
      <Box id="plan" w={78} lookup="grid" />
      <Box id="plan2" bg={grey} label="Arbeitsplan" />
      <PlanButton type="button">abhängiger Arb.Plan</PlanButton>
    </Cell>
    <DateBox>
      <DateRow $mt={4}><Label htmlFor="gueltig">Gültig ab</Label><Box id="gueltig" w={66} /></DateRow>
      <DateRow $mt={4}><Label htmlFor="datum">Datum</Label><Box id="datum" w={66} bg={grey} value="06.03.2016" /></DateRow>
      <DateRow $mt={8}><Label htmlFor="von">Erfasst von</Label><Box id="von" w={126} bg={grey} value="SYSDBA" /></DateRow>
      <DateRule />
      <DateRow $mt={9}>
        <Label htmlFor="gewicht">Gewicht</Label>
        <Spacer />
        <Box id="gewicht" w={66} bg={grey} value="845,000000" align="right" />
        <Unit>kg</Unit>
      </DateRow>
    </DateBox>
    <RemarkLine>
      <Label htmlFor="bemerkung" $w={113}>Bemerkung</Label>
      <Box id="bemerkung" />
    </RemarkLine>
  </Form>
);

const tabs: [string, string, number][] = [
  ["1", "Details", 56],
  ["2", "Kalkulation", 75],
  ["3", "Sachmerkmale", 94],
  ["4", "Positionen", 73],
  ["5", "Aufgelöst", 71],
];

const CenterPanel = () => (
  <Center>
    <PanelHead>
      <PinTile aria-label="Anheften"><PushPin /></PinTile>
      <PanelTitle>Stücklistenkopf</PanelTitle>
    </PanelHead>
    <CenterBody>
      <CenterMain>
        <HeadForm />
        <Tabs role="tablist">
          {tabs.map(([no, text, w]) => (
            <Tab key={no} role="tab" $w={w} $on={no === "5"}><u>{no}</u>. {text}</Tab>
          ))}
        </Tabs>
        <PartsPane>
          <PartsTree>
            {parts.map(([level, text, folder], i) => (
              <PartsRow key={i} $level={level}>
                <PartsIcon $w={15}>{folder && <OpenMark />}</PartsIcon>
                <PartsIcon $w={18}>{folder ? <Folder /> : <Cube />}</PartsIcon>
                <PartsText $on={i === 0}>{text}</PartsText>
              </PartsRow>
            ))}
          </PartsTree>
        </PartsPane>
      </CenterMain>
      <ScrollTrack>
        <ScrollUp aria-label="Nach oben"><svg width="7" height="4" viewBox="0 0 7 4"><path d="M3.500 0L7 4H0z" fill="#34658f" /></svg></ScrollUp>
      </ScrollTrack>
    </CenterBody>
  </Center>
);

const RightSide = () => (
  <PrintSide>
    <PrintHead>
      <SmallTile $bg={c.tile} aria-label="Drucken"><SmallIcon name="print" /></SmallTile>
      <PanelTitle>Drucken</PanelTitle>
    </PrintHead>
    <SmallTiles>
      <SmallTile $bg="#959595" aria-label="Liste"><SmallIcon name="clip" /></SmallTile>
      <SmallTile $bg="#d8222c" aria-label="Etikett"><SmallIcon name="tag" /></SmallTile>
      <SmallTile $bg={c.tile} aria-label="Drucker"><SmallIcon name="print" /></SmallTile>
      <SmallTile $bg="#8a12dc" aria-label="Ordner"><SmallIcon name="binders" /></SmallTile>
      <SmallTile $bg="#45ad3c" aria-label="Favoriten"><SmallIcon name="star" /></SmallTile>
      <SmallTile $bg="#d94f26" aria-label="Hinweise"><SmallIcon name="bulb" /></SmallTile>
    </SmallTiles>
    <PrintList>
      {prints.map((text, i) => (
        <PrintItem key={text}><PrintLink href="#" $on={i === 0}>{text}</PrintLink></PrintItem>
      ))}
    </PrintList>
  </PrintSide>
);

const Report = () => (
  <Page>
    <ReportTitle>Strukturstückliste</ReportTitle>
    <ReportHead>
      <div>
        <Info $h={36}><dt>Artikelbez.</dt><Big $size={21}>aventos 1,6L</Big></Info>
        <Info $mt={26} $h={24}><dt>Artikelbez. 2</dt><Big $size={16}>3türer normal</Big></Info>
        <Info $mt={8}><dt>Unterlage:</dt><dd>AU01{"\n"}(CAD-LfdNr:   Akt. Datei: )</dd></Info>
        <Info $mt={4}><dt>Katalognr.:</dt><dd>aventos 1,6L</dd></Info>
        <Info $mt={24}><dt>Zeich.Nr.:</dt><dd>---</dd><dd>Kunde.Zeich.Nr.: ---</dd></Info>
      </div>
      <Usage>
        <UsageRow $mt={5} $h={16}>Variante: <UsageValue>1</UsageValue></UsageRow>
        <UsageRow $h={16}>Aktuelle Version: <UsageValue>J</UsageValue></UsageRow>
        <UsageBox>
          {usage.map(([text, flag], i) => (
            <UsageRow key={i} $mt={i === 2 || i === 4 ? 3 : 0}>{text} <UsageFlag>{flag}</UsageFlag></UsageRow>
          ))}
        </UsageBox>
        <MetaRow><span>Bis Ebene:</span><span>99</span></MetaRow>
        <MetaRow><span>Vorgabepreis:</span><span>10.400,00</span></MetaRow>
        <MetaRow $mt={3}><span>Ersteller:</span><span>SYSDBA</span></MetaRow>
      </Usage>
    </ReportHead>
    <Table>
      <thead>
        <tr>
          <Th $w={61}>Pos.<br />A</Th>
          <Th $w={149}>Zeich.-Nr. / Kund.Zeich.-Nr.<br /><Plain>Artikel-Nr.</Plain></Th>
          <ThTight $w={54}>Menge<br />aufgel.</ThTight>
          <Th>Artikelbezeichnung<br /><Plain>Artikelbezeichnung</Plain></Th>
          <Th $w={140}><DinLine><span>DIN</span><span>Werkstoff</span></DinLine>Oberfläche</Th>
          <ThTight $w={57}>Gewicht<br />freies Kz.</ThTight>
        </tr>
      </thead>
      <tbody>
        {reportRows.map(([pos, kind, no, text]) => (
          <Tr key={pos}>
            <Td><Line $bold $size={12}>{pos}</Line><Line $align="center">{kind}</Line></Td>
            <Td><Line /><Line>{no}</Line></Td>
            <Td $align="center"><Line $bold>1</Line><Line>Stk</Line></Td>
            <Td $bold>{text}</Td>
            <Td />
            <Td $align="right" $bold>0,00</Td>
          </Tr>
        ))}
      </tbody>
    </Table>
  </Page>
);

const PreviewWindow = () => (
  <Preview>
    <TitleBar $active>
      <Logo size={16} />
      <Caption>Druckvorschau: Stückliste aufgelöst</Caption>
      <WindowControls active />
    </TitleBar>
    <PreviewBody>
      <ToolArea>
        <ToolBand>
          <ToolRow>
            <ToolButton name="print" label="Drucken" />
            <ToolButton name="open" label="Öffnen" />
            <ToolButton name="save" label="Speichern" />
            <ToolButton name="exportDoc" label="Exportieren" />
            <ToolButton name="pdf" label="PDF" />
            <ToolButton name="findDoc" label="Dokument suchen" />
            <ToolButton name="mail" label="Mail" />
            <ToolButton name="binoculars" label="Suchen" />
            <ToolSep />
            <ToolButton name="refresh" label="Aktualisieren" />
            <ToolSep />
            <ToolButton name="zoomIn" label="Vergrößern" />
            <SelectBox $w={47}>
              <Select aria-label="Zoom"><option>100%</option></Select>
              <Spin><Spinner /></Spin>
            </SelectBox>
            <ToolButton name="zoomOut" label="Verkleinern" />
            <ToolButton name="screen" label="Vollbild" />
            <ToolSep />
            <ToolButton name="outline" label="Gliederung" />
            <ToolButton name="layout" label="Miniaturen" />
            <ToolButton name="settings" label="Einstellungen" />
            <ToolButton name="editDoc" label="Bearbeiten" />
          </ToolRow>
          <ToolRow $low>
            <ToolButton name="first" label="Erste Seite" />
            <ToolButton name="prev" label="Vorige Seite" />
            <PageInput aria-label="Seite" defaultValue="1" />
            <ToolButton name="next" label="Nächste Seite" />
            <ToolButton name="last" label="Letzte Seite" />
            <DmsLabel>Nach Druck im DMS ablegen<DmsCheck type="checkbox" /></DmsLabel>
            <CloseButton>Schließen</CloseButton>
          </ToolRow>
        </ToolBand>
      </ToolArea>
      <Viewport>
        <Gutter />
        <Report />
        <VScroll><Chevron turn={0} /><VThumb /><Chevron turn={180} /></VScroll>
      </Viewport>
      <HScroll><Chevron turn={-90} /><HThumb /><Chevron turn={90} /></HScroll>
      <Status>
        <StatusPart $w={198}>Seite 1 von 2</StatusPart>
        <StatusPart $w={50}>&nbsp;</StatusPart>
        <StatusPart />
        <svg width="12" height="12" viewBox="0 0 12 12"><path d="M10 1v10H1z" fill="#3f77ad" /></svg>
      </Status>
    </PreviewBody>
  </Preview>
);

export default function App() {
  return (
    <Shell>
      <GlobalStyle />
      <TitleBar>
        <Logo size={16} />
        <Caption>{"AvERP - die kostenlose Warenwirtschaft    (DB: 127.0.0.1/3050:F:\\DB\\AVERP_DEMO.FDB)"}</Caption>
        <WindowControls />
      </TitleBar>
      <Body>
        <MenuBar>
          <MenuTab $on>Start</MenuTab>
          <MenuTab>Datei</MenuTab>
          <MenuTab>Ansicht</MenuTab>
          <MenuTab>Einstellungen</MenuTab>
          <MenuTab>Analyse/Systeminformation</MenuTab>
          <HelpButton aria-label="Hilfe">
            <svg width="16" height="16" viewBox="0 0 16 16">
              <circle cx="8" cy="8" r="7.500" fill="#3f74cf" stroke="#7fa6e6" />
              <path d="M5.500 6c0-3.500 5-3.300 5-.3 0 2-2.500 1.800-2.500 4M8 11v2" fill="none" stroke="#fff" strokeWidth="1.800" />
            </svg>
          </HelpButton>
        </MenuBar>
        <RibbonBar />
        <Work>
          <LeftSide />
          <CenterPanel />
          <RightSide />
        </Work>
        <TaskStrip>
          <Task>Artikelstamm</Task>
          <Task>Stücklistenkopf</Task>
          <Task>Stückliste aufgelöst</Task>
        </TaskStrip>
      </Body>
      <PreviewWindow />
    </Shell>
  );
}
